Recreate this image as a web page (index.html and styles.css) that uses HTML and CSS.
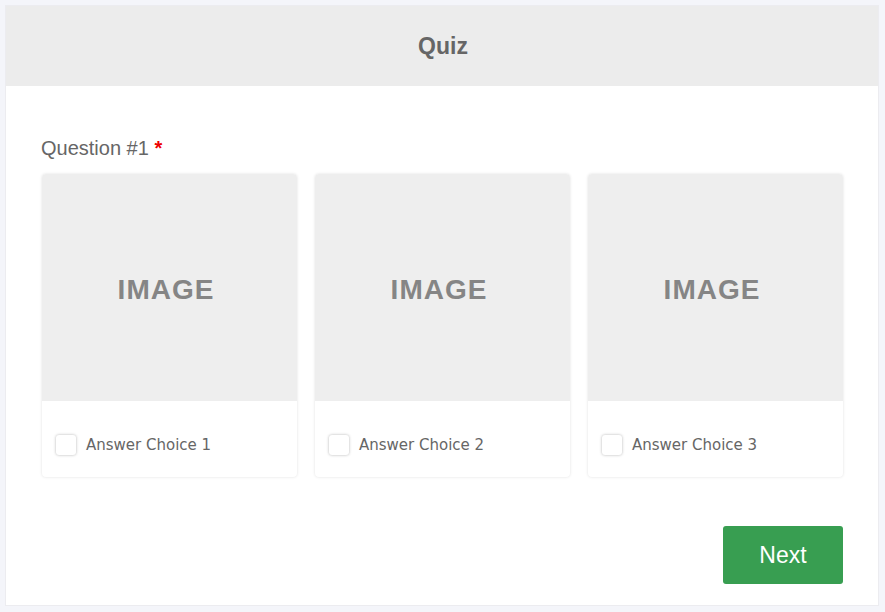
FILE: index.html
```html
<!DOCTYPE html>
<html>
<head>
<meta charset="utf-8">
<link rel="stylesheet" href="styles.css">
</head>
<body>
<div class="quiz">
  <div class="quiz-header"><h1 class="quiz-title">Quiz</h1></div>
  <div class="quiz-body">
    <div class="question-label">Question #1 <span class="required">*</span></div>
    <div class="choices">
      <label class="choice">
        <div class="choice-image">IMAGE</div>
        <div class="choice-footer"><span class="checkbox"></span><span class="choice-text">Answer Choice 1</span></div>
      </label>
      <label class="choice">
        <div class="choice-image">IMAGE</div>
        <div class="choice-footer"><span class="checkbox"></span><span class="choice-text">Answer Choice 2</span></div>
      </label>
      <label class="choice">
        <div class="choice-image">IMAGE</div>
        <div class="choice-footer"><span class="checkbox"></span><span class="choice-text">Answer Choice 3</span></div>
      </label>
    </div>
    <div class="actions"><button class="next-btn">Next</button></div>
  </div>
</div>
</body>
</html>
```
FILE: styles.css
```css
html, body {
  margin: 0;
  padding: 0;
  background: #f4f5fa;
}
body {
  padding: 5px 6px 6px 5px;
  font-family: "Liberation Sans", Arial, sans-serif;
}
.quiz {
  width: 874px;
  height: 601px;
  box-sizing: border-box;
  background: #fff;
  border: 1px solid #ececf0;
  display: flex;
  flex-direction: column;
}
.quiz-header {
  height: 80px;
  background: #ececec;
  display: flex;
  align-items: center;
  justify-content: center;
  flex-shrink: 0;
}
.quiz-title {
  margin: 0;
  font-size: 23px;
  font-weight: bold;
  color: #666;
  padding-left: 2px;
}
.quiz-body {
  padding: 50px 35px 0 36px;
}
.question-label {
  font-size: 20px;
  color: #666;
  line-height: 24px;
  height: 24px;
  margin-left: -1px;
}
.required {
  color: #e00;
  font-weight: bold;
}
.choices {
  display: flex;
  gap: 18px;
  margin-top: 14px;
}
.choice {
  width: 255px;
  height: 303px;
  border-radius: 4px;
  background: #fff;
  box-shadow: 0 0 3px rgba(0,0,0,0.13);
  overflow: hidden;
  display: flex;
  flex-direction: column;
}
.choice-image {
  height: 227px;
  background: #eeeeee;
  display: flex;
  align-items: center;
  justify-content: center;
  font-size: 28px;
  font-weight: bold;
  letter-spacing: 1px;
  color: #858585;
  padding-top: 5px;
  padding-right: 7px;
  box-sizing: border-box;
}
.choice-footer {
  flex: 1;
  display: flex;
  align-items: center;
  padding: 12px 14px 0 14px;
  box-sizing: border-box;
}
.checkbox {
  width: 20px;
  height: 20px;
  border-radius: 3px;
  background: #fff;
  box-shadow: 0 0 3px rgba(0,0,0,0.3);
  margin-right: 10px;
  flex-shrink: 0;
}
.choice-text {
  font-family: "DejaVu Sans", Verdana, sans-serif;
  font-size: 15px;
  color: #666;
}
.actions {
  display: flex;
  justify-content: flex-end;
  margin-top: 49px;
}
.next-btn {
  width: 120px;
  height: 58px;
  background: #389e51;
  border: none;
  border-radius: 3px;
  color: #fff;
  font-family: "Liberation Sans", Arial, sans-serif;
  font-size: 23px;
  padding: 0;
}
```
